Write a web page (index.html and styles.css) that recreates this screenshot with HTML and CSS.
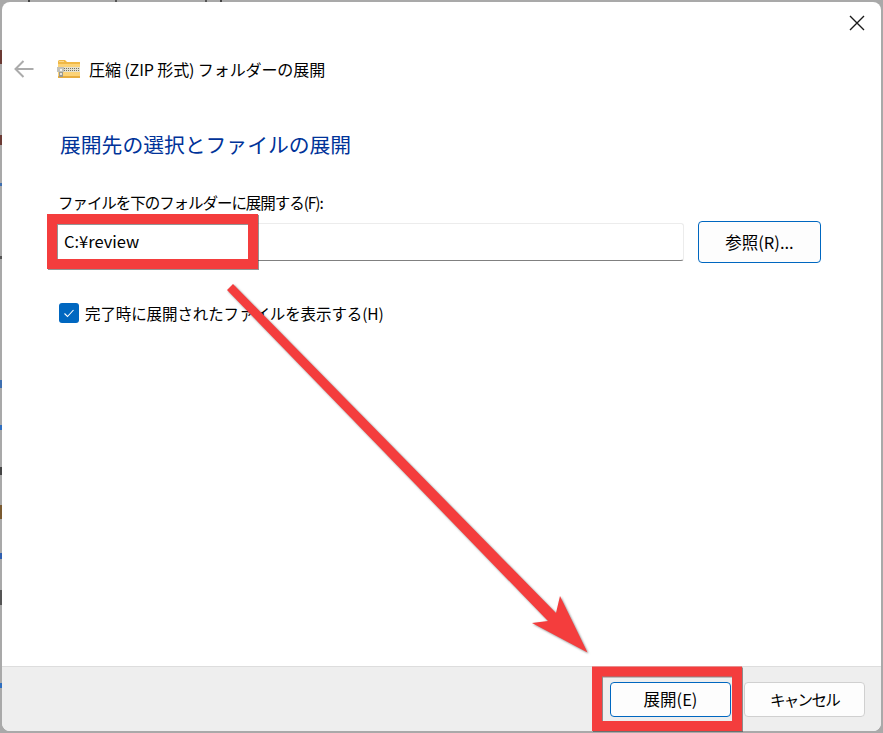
FILE: index.html
```html
<!DOCTYPE html>
<html lang="ja">
<head>
<meta charset="utf-8">
<title>圧縮 (ZIP 形式) フォルダーの展開</title>
<link rel="stylesheet" href="styles.css">
</head>
<body>
<div class="dialog">
  <div class="close-row">
    <svg class="close" viewBox="0 0 16 16" width="16" height="16"><path d="M1 1 15 15M15 1 1 15" stroke="#1a1a1a" stroke-width="1.4" fill="none"/></svg>
  </div>
  <div class="title-row">
    <svg class="back" viewBox="0 0 20 18" width="20" height="18"><path d="M1.5 9H19.5M9.5 1 1.5 9l8 8" stroke="#ababab" stroke-width="2" fill="none"/></svg>
    <svg class="zip" viewBox="0 0 23 20" width="23" height="20">
      <path d="M1 2.5Q1 1 2.5 1H8l2 2H23V7H1Z" fill="#f0b845"/>
      <path d="M2 2H7V3H2Z" fill="#fbd98c"/>
      <path d="M1 5H23V18H1Z" fill="#fcd377"/>
      <path d="M1 17H23V19H1Z" fill="#e8ad3e"/>
      <path d="M7 8H23V13H7Z" fill="#e4e0cf"/>
      <path d="M7 9.5H23M7 11.5H23" stroke="#77735f" stroke-width="1" stroke-dasharray="1 1"/>
      <path d="M0 8H7V13H0Z" fill="#c2c1b9"/>
      <path d="M2 13H6V18H2Z" fill="#9a9990"/>
      <path d="M3 10H5V12H3Z" fill="#f4f4f0"/>
      <path d="M3 14H5V16H3Z" fill="#e5e4dc"/>
    </svg>
    <span class="title">圧縮 (ZIP 形式) フォルダーの展開</span>
  </div>
  <div class="content">
    <h1 class="heading">展開先の選択とファイルの展開</h1>
    <label class="label">ファイルを下のフォルダーに展開する(F):</label>
    <div class="path-row">
      <div class="path-input">C:¥review</div>
      <button class="btn btn-browse">参照(R)...</button>
    </div>
    <div class="check-row">
      <span class="checkbox"><svg viewBox="0 0 20 20" width="20" height="20"><path d="M5.5 10.5 8.5 13.5 14.5 7" stroke="#fff" stroke-width="1.1" fill="none"/></svg></span>
      <span class="check-label">完了時に展開されたファイルを表示する(H)</span>
    </div>
  </div>
  <div class="footer">
    <button class="btn btn-primary">展開(E)</button>
    <button class="btn btn-cancel">キャンセル</button>
  </div>
</div>
<svg class="annot" viewBox="0 0 883 733" width="883" height="733">
  <g class="specks">
    <rect x="0" y="50" width="2" height="14" fill="#6b3a34"/>
    <rect x="0" y="135" width="2" height="10" fill="#6b3a34"/>
    <rect x="0" y="183" width="2" height="3" fill="#3f6fb0"/>
    <rect x="0" y="256" width="2" height="3" fill="#555"/>
    <rect x="0" y="380" width="2" height="8" fill="#3f6fb0"/>
    <rect x="0" y="425" width="2" height="5" fill="#2f6fc0"/>
    <rect x="0" y="467" width="2" height="8" fill="#444"/>
    <rect x="0" y="505" width="2" height="14" fill="#7a5a30"/>
    <rect x="0" y="553" width="2" height="6" fill="#2f5fb0"/>
    <rect x="0" y="590" width="2" height="15" fill="#555"/>
    <rect x="0" y="683" width="2" height="5" fill="#2f6fc0"/>
    <rect x="28" y="0" width="2" height="2" fill="#444"/>
    <rect x="115" y="0" width="2" height="2" fill="#555"/>
    <rect x="205" y="0" width="2" height="2" fill="#555"/>
    <rect x="220" y="0" width="2" height="2" fill="#444"/>
  </g>
  <rect class="box" x="52" y="219" width="201" height="45"/>
  <rect class="box" x="597" y="671.5" width="140" height="54.5"/>
  <polygon class="arrow" points="233,284 556,613 560,596 587.5,652.5 532,623 548,621 227,290"/>
</svg>
</body>
</html>
```
FILE: styles.css
```css
* { box-sizing: border-box; }
html, body { margin: 0; height: 100%; }
body {
  width: 883px;
  height: 733px;
  padding: 2px;
  background: #a9a9a9;
  overflow: hidden;
  font-family: "Noto Sans CJK JP", "Open Sans", sans-serif;
  color: #000;
}
.dialog {
  width: 879px;
  height: 729px;
  background: #fff;
  border-radius: 8px;
  display: flex;
  flex-direction: column;
  overflow: hidden;
}
.close-row {
  display: flex;
  justify-content: flex-end;
  padding: 13px 16px 0 0;
  height: 46px;
}
.title-row {
  display: flex;
  align-items: center;
  height: 42px;
  padding-left: 12px;
}
.back { margin-right: 23px; }
.zip { margin-right: 9px; }
.title { font-size: 16px; line-height: 20px; letter-spacing: -0.1px; }
.content {
  flex: 1;
  padding: 38px 60px 0 56px;
  display: flex;
  flex-direction: column;
}
.heading {
  margin: 0 0 0 2px;
  font-size: 20.8px;
  font-weight: 400;
  line-height: 32px;
  color: #003399;
}
.label {
  margin-top: 32px;
  font-size: 15.5px;
  line-height: 20px;
  letter-spacing: -1.05px;
}
.path-row {
  display: flex;
  align-items: center;
  margin-top: 9px;
  margin-left: -6px;
}
.path-input {
  width: 632px;
  height: 38px;
  border: 1px solid #ececec;
  border-bottom: 1px solid #808080;
  border-radius: 3px;
  padding-left: 11px;
  font-size: 16.5px;
  line-height: 34px;
}
.btn {
  font-family: inherit;
  font-size: 16.5px;
  color: #000;
  border-radius: 4px;
  padding: 0;
  background: #fdfdfd;
}
.btn-browse {
  width: 123px;
  height: 42px;
  margin-left: 14px;
  border: 1px solid #0067c0;
}
.check-row {
  display: flex;
  align-items: center;
  margin-top: 40px;
  margin-left: 1px;
}
.checkbox {
  width: 20px;
  height: 20px;
  border-radius: 3px;
  background: #0067c0;
  display: flex;
}
.check-label { margin-left: 6px; font-size: 15.5px; line-height: 20px; letter-spacing: -0.1px; }
.footer {
  height: 65px;
  background: #eeeeee;
  border-top: 1px solid #dddddd;
  display: flex;
  justify-content: flex-end;
  align-items: center;
  gap: 13px;
  padding: 0 16px 0 0;
}
.btn-primary, .btn-cancel { width: 121px; height: 35px; }
.btn-primary { border: 1px solid #0067c0; }
.btn-cancel { border: 1px solid #d0d0d0; font-size: 15.5px; letter-spacing: -1.7px; }
.annot { position: absolute; left: 0; top: 0; pointer-events: none; }
.box { fill: none; stroke: #f43d3d; stroke-width: 10; filter: drop-shadow(1px 1px 0.6px rgba(60,60,60,.55)); }
.arrow { fill: #f43d3d; filter: drop-shadow(1px 1px 1px rgba(60,60,60,.6)); }
```
